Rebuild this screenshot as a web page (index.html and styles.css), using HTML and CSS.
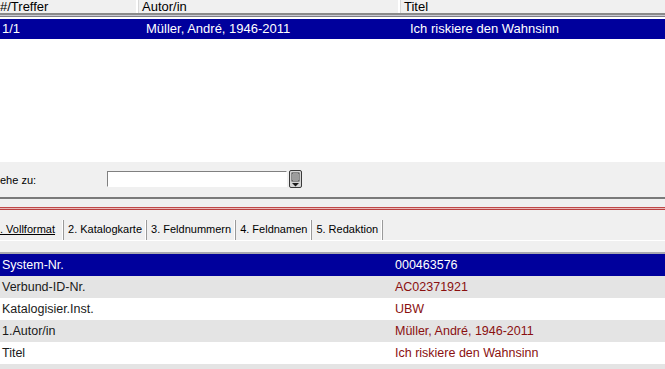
FILE: index.html
```html
<!DOCTYPE html>
<html lang="de">
<head>
  <meta charset="UTF-8">
  <title>Katalog</title>
  <link rel="stylesheet" href="styles.css">
</head>
<body>

  <!-- Trefferliste -->
  <div class="hits">
    <div class="hits-head">
      <div class="col col-nr">#/Treffer</div>
      <div class="col col-author">Autor/in</div>
      <div class="col col-title">Titel</div>
    </div>
    <div class="hits-rule"></div>
    <div class="hits-row selected">
      <div class="col col-nr">1/1</div>
      <div class="col col-author">Müller, André, 1946-2011</div>
      <div class="col col-title">Ich riskiere den Wahnsinn</div>
    </div>
  </div>

  <!-- Gehe zu -->
  <div class="goto">
    <span class="goto-label">ehe zu:</span>
    <input type="text" class="goto-input">
    <span class="goto-btn">
      <svg width="13" height="18" viewBox="0 0 13 18">
        <rect x="0.5" y="0.5" width="12" height="17" rx="1.5" fill="#d6d6d6" stroke="#3a3a3a"/>
        <rect x="3" y="3" width="7" height="8" fill="#fff" stroke="#3a3a3a"/>
        <line x1="4" y1="5" x2="9" y2="5" stroke="#3a3a3a"/>
        <line x1="4" y1="7" x2="9" y2="7" stroke="#3a3a3a"/>
        <line x1="4" y1="9" x2="9" y2="9" stroke="#3a3a3a"/>
        <polygon points="3,13 10,13 6.5,16.5" fill="#1a1a1a"/>
      </svg>
    </span>
  </div>
  <div class="split"></div>

  <!-- Reiter -->
  <div class="tabs">
    <span class="tab active">. Vollformat</span>
    <span class="tab">2. Katalogkarte</span>
    <span class="tab">3. Feldnummern</span>
    <span class="tab">4. Feldnamen</span>
    <span class="tab">5. Redaktion</span>
  </div>

  <!-- Vollanzeige -->
  <div class="detail">
    <div class="detail-row selected"><span class="label">System-Nr.</span><span class="value">000463576</span></div>
    <div class="detail-row"><span class="label">Verbund-ID-Nr.</span><span class="value">AC02371921</span></div>
    <div class="detail-row"><span class="label">Katalogisier.Inst.</span><span class="value">UBW</span></div>
    <div class="detail-row"><span class="label">1.Autor/in</span><span class="value">Müller, André, 1946-2011</span></div>
    <div class="detail-row"><span class="label">Titel</span><span class="value">Ich riskiere den Wahnsinn</span></div>
    <div class="detail-row"><span class="label"></span><span class="value"></span></div>
  </div>

</body>
</html>
```

FILE: styles.css
```css
body {
  margin: 0;
  background: #f0f0f0;
  font-family: "Liberation Sans", Arial, sans-serif;
  overflow: hidden;
}
.hits {
  height: 160px;
  background: #fff;
}
.hits-head {
  display: flex;
  height: 13px;
  background: #f0f0f0;
  font-size: 13px;
  line-height: 13px;
  overflow: hidden;
}
.hits-head .col {
  border-right: 1px solid #d8d8d8;
  box-shadow: inset -2px 0 0 #fff;
}
.hits-head .col-nr {
  padding-left: 0;
}
.hits-head .col-author {
  padding-left: 3px;
}
.hits-head .col-title {
  padding-left: 3px;
  border-right: none;
  box-shadow: none;
}
.col-nr {
  width: 139px;
  padding-left: 2px;
  box-sizing: border-box;
}
.col-author {
  width: 262px;
  padding-left: 7px;
  box-sizing: border-box;
}
.col-title {
  flex: 1;
  padding-left: 9px;
}
.hits-rule {
  height: 6px;
  background: linear-gradient(#8a8a8a 0, #8a8a8a 2px, #c9c9d2 2px, #c9c9d2 3px, #7e7e86 3px, #7e7e86 4px, #fff 4px);
}
.hits-row {
  display: flex;
  height: 20px;
  line-height: 20px;
  font-size: 13px;
}
.selected {
  background: #00009c;
  color: #fff;
}
.goto {
  display: flex;
  align-items: center;
  height: 34px;
  padding-bottom: 1px;
  border-top: 2px solid #fff;
  border-bottom: 2px solid #7a7a7a;
  font-family: "Liberation Sans", Tahoma, sans-serif;
  font-size: 11px;
}
.goto-label {
  width: 107px;
  padding-top: 2px;
}
.goto-input {
  width: 180px;
  height: 16px;
  margin: 0 2px 0 0;
  padding: 0;
  border: 1px solid #fff;
  border-top-color: #808080;
  border-left-color: #808080;
  background: #fff;
  box-sizing: border-box;
}
.goto-btn {
  display: flex;
}
.split {
  height: 10px;
  background: linear-gradient(#f0f0f0 0, #f0f0f0 8px, #c04848 8px, #c04848 9px, #e8b8b8 9px, #e8b8b8 10px);
  border-bottom: 1px solid #b84040;
}
.tabs {
  display: flex;
  align-items: flex-end;
  height: 30px;
  font-size: 11px;
  color: #000;
  border-bottom: 1px solid #fff;
}
.tab {
  height: 20px;
  line-height: 19px;
  padding: 0 4px;
  border-right: 1px solid #9a9a9a;
  box-shadow: inset -1px 0 0 #fff;
}
.tab.active {
  padding-left: 0;
  padding-right: 8px;
  text-decoration: underline;
}
.detail {
  margin-top: 11px;
  border-top: 2px solid #a8a8b0;
  font-size: 12.5px;
}
.detail-row {
  display: flex;
  height: 22px;
  line-height: 22px;
  background: #fff;
}
.detail-row:nth-child(even) {
  background: #e4e4e4;
}
.detail-row.selected {
  background: #00009c;
}
.label {
  width: 393px;
  padding-left: 2px;
  color: #1a1a1a;
}
.value {
  color: #8a1010;
}
.selected .label,
.selected .value {
  color: #fff;
}
```
